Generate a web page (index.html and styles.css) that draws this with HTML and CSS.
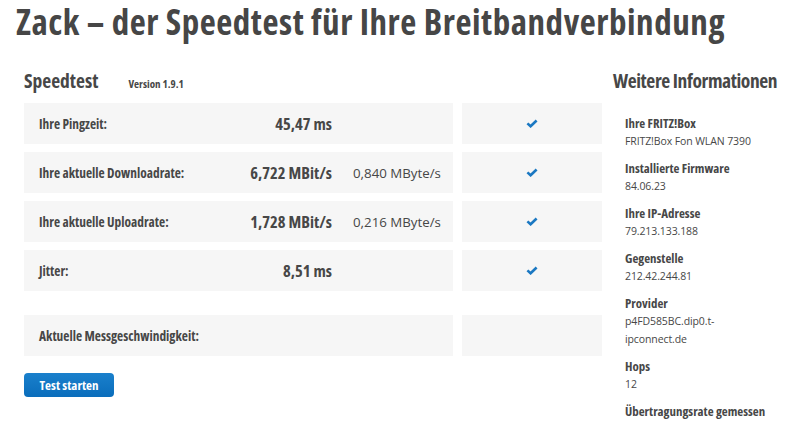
FILE: index.html
```html
<!DOCTYPE html>
<html lang="de">
<head>
    <meta charset="UTF-8">
    <meta name="viewport" content="width=device-width, initial-scale=1.0">
    <title>Zack – der Speedtest</title>
    <link rel="stylesheet" href="styles.css">
</head>
<body>
    <h1 class="page-title">Zack – der Speedtest für Ihre Breitbandverbindung</h1>

    <div class="layout">
        <main class="speedtest">
            <div class="speedtest-head">
                <h2>Speedtest</h2>
                <span class="version">Version 1.9.1</span>
            </div>

            <div class="result-row">
                <div class="result-cell">
                    <span class="result-label">Ihre Pingzeit:</span>
                    <span class="result-value">45,47 ms</span>
                    <span class="result-extra"></span>
                </div>
                <div class="status-cell">
                    <svg class="check" width="12" height="9" viewBox="0 0 12 9"><polyline points="1.4,4.4 4.6,7.3 10.6,1.5" /></svg>
                </div>
            </div>

            <div class="result-row">
                <div class="result-cell">
                    <span class="result-label">Ihre aktuelle Downloadrate:</span>
                    <span class="result-value">6,722 MBit/s</span>
                    <span class="result-extra">0,840 MByte/s</span>
                </div>
                <div class="status-cell">
                    <svg class="check" width="12" height="9" viewBox="0 0 12 9"><polyline points="1.4,4.4 4.6,7.3 10.6,1.5" /></svg>
                </div>
            </div>

            <div class="result-row">
                <div class="result-cell">
                    <span class="result-label">Ihre aktuelle Uploadrate:</span>
                    <span class="result-value">1,728 MBit/s</span>
                    <span class="result-extra">0,216 MByte/s</span>
                </div>
                <div class="status-cell">
                    <svg class="check" width="12" height="9" viewBox="0 0 12 9"><polyline points="1.4,4.4 4.6,7.3 10.6,1.5" /></svg>
                </div>
            </div>

            <div class="result-row">
                <div class="result-cell">
                    <span class="result-label">Jitter:</span>
                    <span class="result-value">8,51 ms</span>
                    <span class="result-extra"></span>
                </div>
                <div class="status-cell">
                    <svg class="check" width="12" height="9" viewBox="0 0 12 9"><polyline points="1.4,4.4 4.6,7.3 10.6,1.5" /></svg>
                </div>
            </div>

            <div class="result-row live-row">
                <div class="result-cell">
                    <span class="result-label">Aktuelle Messgeschwindigkeit:</span>
                    <span class="result-value"></span>
                    <span class="result-extra"></span>
                </div>
                <div class="status-cell"></div>
            </div>

            <button class="start-button">Test starten</button>
        </main>

        <aside class="info">
            <h2>Weitere Informationen</h2>
            <dl class="info-list">
                <dt>Ihre FRITZ!Box</dt>
                <dd>FRITZ!Box Fon WLAN 7390</dd>
                <dt>Installierte Firmware</dt>
                <dd>84.06.23</dd>
                <dt>Ihre IP-Adresse</dt>
                <dd>79.213.133.188</dd>
                <dt>Gegenstelle</dt>
                <dd>212.42.244.81</dd>
                <dt>Provider</dt>
                <dd>p4FD585BC.dip0.t-ipconnect.de</dd>
                <dt>Hops</dt>
                <dd>12</dd>
                <dt>Übertragungsrate gemessen</dt>
            </dl>
        </aside>
    </div>
</body>
</html>
```

FILE: styles.css
```css
:root {
    --text-color: #474747;
    --cell-bg: #f6f6f6;
    --accent: #1b78c2;
}

* {
    margin: 0;
    padding: 0;
    box-sizing: border-box;
}

body {
    font-family: 'Open Sans', 'DejaVu Sans', sans-serif;
    color: var(--text-color);
    background: #ffffff;
    padding: 0 0 0 16px;
}

/* bold texts use the condensed cut of the family */
.page-title,
h2,
.version,
.result-label,
.result-value,
.start-button,
.info-list dt {
    font-weight: 700;
    font-stretch: 75%;
    white-space: nowrap;
}

.page-title {
    font-size: 35px;
    line-height: 44px;
    letter-spacing: 0.55px;
    color: #464646;
}

.layout {
    display: flex;
    gap: 11px;
    padding: 24px 0 0 8px;
}

.speedtest {
    width: 578px;
}

.speedtest-head {
    display: flex;
    align-items: baseline;
    gap: 30px;
    height: 35px;
}

h2 {
    font-size: 19.5px;
    line-height: 26px;
}

.version {
    font-size: 11px;
}

.result-row {
    display: flex;
    gap: 9px;
    height: 41px;
    margin-bottom: 8px;
}

.live-row {
    margin-top: 24px;
}

.result-cell {
    flex: 1;
    background: var(--cell-bg);
    display: grid;
    grid-template-columns: 1fr 120px 121px;
    align-items: center;
    padding-left: 15px;
}

.result-label {
    font-size: 13.4px;
}

.result-value {
    font-size: 16.5px;
    text-align: right;
}

.result-extra {
    font-size: 13.3px;
    padding-left: 21px;
    white-space: nowrap;
}

.status-cell {
    width: 140px;
    background: var(--cell-bg);
    display: flex;
    align-items: center;
    justify-content: center;
}

.check polyline {
    fill: none;
    stroke: var(--accent);
    stroke-width: 2.6;
}

.start-button {
    margin-top: 9px;
    width: 90px;
    height: 24px;
    border: none;
    border-radius: 4px;
    background: linear-gradient(#1a80cc, #0a6dbb);
    color: #ffffff;
    font-family: inherit;
    font-size: 13px;
    cursor: pointer;
}

.info {
    width: 176px;
}

.info h2 {
    letter-spacing: -0.4px;
    margin-bottom: 20px;
}

.info-list {
    width: 148px;
    margin-left: 12px;
}

.info-list dt {
    font-size: 12.9px;
    line-height: 18px;
}

.info-list dd {
    font-size: 10.5px;
    letter-spacing: -0.1px;
    line-height: 18px;
    margin-bottom: 9px;
}
```
